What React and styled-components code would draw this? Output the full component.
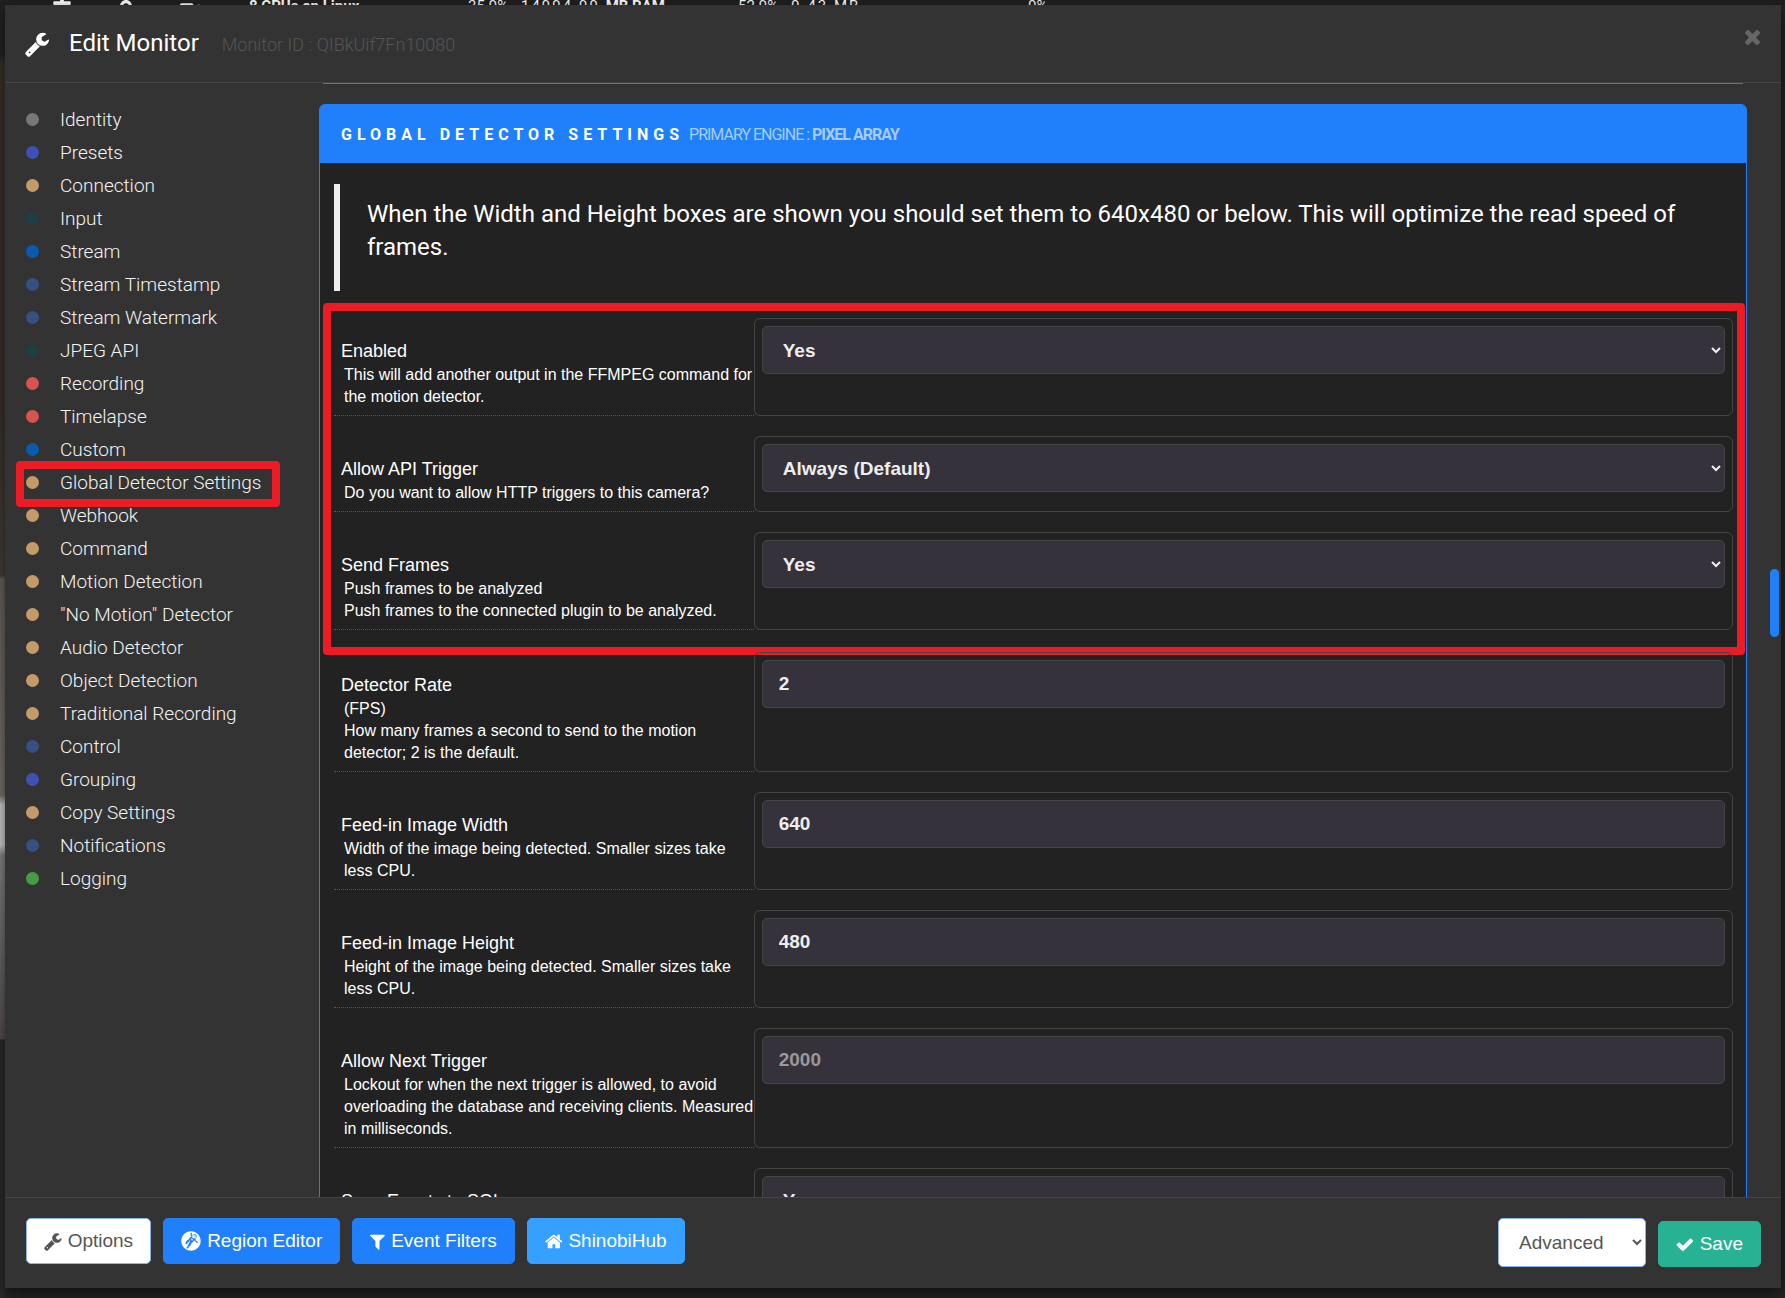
import React from 'react';
import styled, { createGlobalStyle } from 'styled-components';
import { FaGrav, FaLock, FaPlus, FaVideo } from 'react-icons/fa';

const GlobalStyle = createGlobalStyle`
  * {
    box-sizing: border-box;
  }

  body {
    margin: 0;
    background: #242424;
    color: #fff;
    font-family: Roboto, 'Liberation Sans', sans-serif;
  }

  button, input, select {
    font-family: 'Liberation Sans', Arial, sans-serif;
  }
`;

const Page = styled.div`
  position: relative;
  height: 100vh;
  overflow: hidden;
`;

const StatusBar = styled.header`
  display: flex;
  align-items: flex-start;
  height: 5px;
  padding-left: 52px;
  overflow: hidden;
  background: #202020;
`;

const StatusIcons = styled.div`
  display: flex;
  align-items: flex-start;
  gap: 44px;
  width: 197px;
  height: 5px;
  font-size: 20px;

  svg:first-child {
    align-self: center;
  }
`;

const Stat = styled.span`
  width: ${props => props.width}px;
  font-size: 15px;
  line-height: 12px;
  letter-spacing: ${props => (props.$spaced ? 2 : 0)}px;
  white-space: pre;

  b {
    letter-spacing: 0;
  }
`;

const Backdrop = styled.div`
  display: flex;
  height: calc(100vh - 5px);
  padding: 0 4px 10px 5px;
  background: linear-gradient(to bottom, #222 0 48px, #3a3229 60px, #3a302a 400px, #473d37 570px, #66615b 574px, #77736c 790px, #d0d0d0 800px 840px, #88868a 850px, #55504f 1034px, #2a2a2a 1035px);
  background-repeat: no-repeat;
  background-size: 5px 100%;
`;

const Modal = styled.div`
  display: flex;
  flex: 1;
  flex-direction: column;
  min-width: 0;
  background: #333;
  box-shadow: 0 5px 15px rgba(0, 0, 0, 0.6);
`;

const ModalHeader = styled.div`
  display: flex;
  flex: none;
  align-items: center;
  height: 78px;
  padding: 0 21px 0 20px;
  border-bottom: 1px solid #444;
`;

const HeaderIcon = styled.span`
  display: flex;
  width: 44px;
  font-size: 26px;
`;

const Title = styled.h1`
  flex: 1;
  margin: 0;
  font-size: 24px;
  font-weight: 400;
  line-height: 34px;
`;

const MonitorId = styled.small`
  margin-left: 23px;
  color: #555;
  font-size: 18px;
  font-weight: 300;
`;

const CloseButton = styled.button`
  display: flex;
  align-self: flex-start;
  margin-top: 25px;
  padding: 0;
  border: 0;
  background: none;
  color: #666;
  font-size: 15px;
`;

const ModalBody = styled.div`
  display: flex;
  flex: 1;
  min-height: 0;
`;

const Sidebar = styled.nav`
  flex: none;
  width: 314px;
  padding-top: 20px;
`;

const SidebarLink = styled.a`
  position: relative;
  display: flex;
  align-items: center;
  gap: 21px;
  height: 33px;
  padding-left: 21px;
  color: #f4f4f4;
  font-size: 19px;
  font-weight: 300;
  text-decoration: none;
`;

const Dot = styled.span`
  width: 13px;
  height: 13px;
  border-radius: 50%;
  background: ${props => props.color};
`;

const LinkHighlight = styled.span`
  position: absolute;
  inset: -5px 39px -8px 11px;
  border: 8px solid #ed1c24;
  border-radius: 4px;
  pointer-events: none;
`;

const Content = styled.main`
  flex: 1;
  min-width: 0;
  padding-right: 10px;
  overflow: hidden;
`;

const PreviousCard = styled.div`
  height: 1px;
  margin: 0 28px 20px 4px;
  background: #2080fc;
`;

const Card = styled.section`
  margin-right: 24px;
  border: 1px solid #2080fc;
  border-radius: 6px;
  background: #222;
`;

const CardHeader = styled.h2`
  display: flex;
  align-items: center;
  height: 58px;
  margin: 0;
  padding-left: 21px;
  border-radius: 4px 4px 0 0;
  background: #2080fc;
  font-size: 16px;
  font-weight: 700;
  letter-spacing: 5px;
`;

const Engine = styled.small`
  margin-left: 5px;
  color: #a6ccfd;
  font-size: 16px;
  font-weight: 400;
  letter-spacing: -1px;
`;

const CardBody = styled.div`
  padding: 21px 13px 21px 14px;
`;

const Note = styled.blockquote`
  height: 107px;
  margin: 0 0 27px;
  padding: 14px 27px;
  border-left: 6px solid #eee;
  font-size: 24px;
  line-height: 33px;
`;

const FieldGroup = styled.div`
  position: relative;
  display: grid;
  gap: 20px;
  margin-bottom: 22px;
`;

const GroupHighlight = styled.span`
  position: absolute;
  inset: -15px -12px -25px -11px;
  border: 8px solid #ed1c24;
  border-radius: 4px;
  pointer-events: none;
`;

const FieldRow = styled.div`
  display: grid;
  grid-template-columns: 30% 1fr;
`;

const FieldLabel = styled.label`
  padding: 21px 0 7px 7px;
  border-bottom: 1px dotted #555;
  font-family: 'Liberation Sans', Arial, sans-serif;
  font-size: 18px;
  line-height: 25px;
`;

const Description = styled.small`
  display: block;
  padding-left: 3px;
  font-size: 16px;
  line-height: 22px;
  white-space: pre-line;
`;

const FieldBox = styled.div`
  padding: 7px;
  border: 1px solid #444;
  border-radius: 6px;
`;

const Input = styled.input`
  display: block;
  width: 100%;
  height: 48px;
  padding: 0 16px;
  border: 1px solid #444;
  border-radius: 5px;
  background: #36323c;
  color: #eee;
  font-size: 19px;
  font-weight: 700;

  &::placeholder {
    color: #999;
  }
`;

const ModalFooter = styled.div`
  display: flex;
  flex: none;
  align-items: flex-start;
  gap: 12px;
  height: 91px;
  padding: 20px 20px 0 21px;
  border-top: 1px solid #444;
`;

const Button = styled.button`
  display: flex;
  align-items: center;
  gap: 6px;
  height: 46px;
  padding: 0 17px;
  border: 1px solid ${props => props.$border || props.color};
  border-radius: 5px;
  background: ${props => props.color};
  color: ${props => props.$text || '#fff'};
  font-size: 19px;
`;

const FooterRight = styled.div`
  display: flex;
  align-items: flex-end;
  gap: 12px;
  margin-left: auto;
`;

const ModeSelect = styled.select`
  width: 148px;
  height: 49px;
  padding: 0 16px;
  border: 1px solid #8ab4f0;
  border-radius: 5px;
  background: #fff;
  color: #555;
  font-size: 19px;
`;

const ScrollThumb = styled.div`
  position: absolute;
  top: 569px;
  right: 6px;
  width: 9px;
  height: 68px;
  border-radius: 5px;
  background: #2080fc;
`;

// [x, y, width, height, path]
const icons = {
  wrench: [
    64, 0, 1664, 1792,
    'M448 1472q0-26-19-45t-45-19-45 19-19 45 19 45 45 19 45-19 19-45zm644-420l-682 682q-37 37-90 37-52 0-91-37l-106-108q-38-36-38-90 0-53 38-91l681-681q39 98 114.5 173.5t173.5 114.5zm634-435q0 39-23 106-47 134-164.5 217.5t-258.5 83.5q-185 0-316.5-131.5t-131.5-316.5 131.5-316.5 316.5-131.5q58 0 121.5 16.5t107.5 46.5q16 11 16 28t-16 28l-293 169v224l193 107q5-3 79-48.5t135.5-81 70.5-35.5q15 0 23.5 10t8.5 25z',
  ],
  filter: [
    192, 0, 1408, 1792,
    'M1595 295q17 41-14 70l-493 493v742q0 42-39 59-13 5-25 5-27 0-45-19l-256-256q-19-19-19-45v-486l-493-493q-31-29-14-70 17-39 59-39h1280q42 0 59 39z',
  ],
  home: [
    64, 0, 1664, 1792,
    'M1472 992v480q0 26-19 45t-45 19h-384v-384h-256v384h-384q-26 0-45-19t-19-45v-480q0-1 .5-3t.5-3l575-474 575 474q1 2 1 6zm223-69l-62 74q-8 9-21 11h-3q-13 0-21-7l-692-577-692 577q-12 8-24 7-13-2-21-11l-62-74q-8-10-7-23.5t11-21.5l719-599q32-26 76-26t76 26l244 204v-195q0-14 9-23t23-9h192q14 0 23 9t9 23v408l219 182q10 8 11 21.5t-7 23.5z',
  ],
  check: [
    64, 0, 1664, 1792,
    'M1671 566q0 40-28 68l-724 724-136 136q-28 28-68 28t-68-28l-136-136-362-362q-28-28-28-68t28-68l136-136q28-28 68-28t68 28l294 295 656-657q28-28 68-28t68 28l136 136q28 28 28 68z',
  ],
  close: [
    302, 366, 1188, 1188,
    'M1490 1322q0 40-28 68l-136 136q-28 28-68 28t-68-28l-294-294-294 294q-28 28-68 28t-68-28l-136-136q-28-28-28-68t28-68l294-294-294-294q-28-28-28-68t28-68l136-136q28-28 68-28t68 28l294 294 294-294q28-28 68-28t68 28l136 136q28 28 28 68t-28 68l-294 294 294 294q28 28 28 68z',
  ],
};

const sections = [
  ['Identity', '#777'],
  ['Presets', '#3f51b5'],
  ['Connection', '#c49a68'],
  ['Input', '#1f3d44'],
  ['Stream', '#0a5ab0'],
  ['Stream Timestamp', '#375083'],
  ['Stream Watermark', '#375083'],
  ['JPEG API', '#1f3d44'],
  ['Recording', '#d9534f'],
  ['Timelapse', '#d9534f'],
  ['Custom', '#0a5ab0'],
  ['Global Detector Settings', '#c49a68'],
  ['Webhook', '#c49a68'],
  ['Command', '#c49a68'],
  ['Motion Detection', '#c49a68'],
  ['"No Motion" Detector', '#c49a68'],
  ['Audio Detector', '#c49a68'],
  ['Object Detection', '#c49a68'],
  ['Traditional Recording', '#c49a68'],
  ['Control', '#375083'],
  ['Grouping', '#3f51b5'],
  ['Copy Settings', '#c49a68'],
  ['Notifications', '#375083'],
  ['Logging', '#449d44'],
];

const triggerFields = [
  {
    id: 'detector',
    label: 'Enabled',
    description: 'This will add another output in the FFMPEG command for the motion detector.',
    options: ['Yes', 'No'],
  },
  {
    id: 'detector_trigger',
    label: 'Allow API Trigger',
    description: 'Do you want to allow HTTP triggers to this camera?',
    options: ['Always (Default)', 'No'],
  },
  {
    id: 'detector_send_frames',
    label: 'Send Frames',
    description: 'Push frames to be analyzed\nPush frames to the connected plugin to be analyzed.',
    options: ['Yes', 'No'],
  },
];

const frameFields = [
  {
    id: 'detector_fps',
    label: 'Detector Rate',
    description: '(FPS)\nHow many frames a second to send to the motion detector; 2 is the default.',
    value: '2',
  },
  {
    id: 'detector_scale_x',
    label: 'Feed-in Image Width',
    description: 'Width of the image being detected. Smaller sizes take less CPU.',
    value: '640',
  },
  {
    id: 'detector_scale_y',
    label: 'Feed-in Image Height',
    description: 'Height of the image being detected. Smaller sizes take less CPU.',
    value: '480',
  },
  {
    id: 'detector_lock_timeout',
    label: 'Allow Next Trigger',
    description:
      'Lockout for when the next trigger is allowed, to avoid overloading the database and receiving clients. Measured in milliseconds.',
    placeholder: '2000',
  },
  {
    id: 'detector_save',
    label: 'Save Events to SQL',
    description: 'Save Motion Events in SQL.',
    options: ['Yes', 'No'],
  },
];

function Icon({ name }) {
  const [x, y, width, height, path] = icons[name];

  return (
    <svg viewBox={`${x} ${y} ${width} ${height}`} height="1em" fill="currentColor" aria-hidden="true">
      <path d={path} />
    </svg>
  );
}

function Field({ field }) {
  return (
    <FieldRow>
      <FieldLabel htmlFor={field.id}>
        {field.label}
        <Description>{field.description}</Description>
      </FieldLabel>
      <FieldBox>
        {field.options ? (
          <Input as="select" id={field.id}>
            {field.options.map(option => (
              <option key={option}>{option}</option>
            ))}
          </Input>
        ) : (
          <Input id={field.id} defaultValue={field.value} placeholder={field.placeholder} />
        )}
      </FieldBox>
    </FieldRow>
  );
}

export default function App() {
  return (
    <Page>
      <GlobalStyle />
      <StatusBar>
        <StatusIcons>
          <FaPlus />
          <FaLock />
          <FaVideo />
        </StatusIcons>
        <Stat width={219}>
          <b>8 CPUs on Linux</b>
        </Stat>
        <Stat width={53}>35.9%</Stat>
        <Stat width={217} $spaced>
          14994.99 <b>MB RAM</b>
        </Stat>
        <Stat width={53}>52.9%</Stat>
        <Stat width={237} $spaced>
          0.43 MB
        </Stat>
        <Stat width={40}>0%</Stat>
      </StatusBar>
      <Backdrop>
        <Modal>
          <ModalHeader>
            <HeaderIcon>
              <Icon name="wrench" />
            </HeaderIcon>
            <Title>
              Edit Monitor
              <MonitorId>Monitor ID : QIBkUif7Fn10080</MonitorId>
            </Title>
            <CloseButton aria-label="Close">
              <Icon name="close" />
            </CloseButton>
          </ModalHeader>
          <ModalBody>
            <Sidebar>
              {sections.map(([name, color]) => (
                <SidebarLink key={name} href="#">
                  <Dot color={color} />
                  {name}
                  {name === 'Global Detector Settings' && <LinkHighlight />}
                </SidebarLink>
              ))}
            </Sidebar>
            <Content>
              <PreviousCard />
              <Card>
                <CardHeader>
                  GLOBAL DETECTOR SETTINGS
                  <Engine>
                    PRIMARY ENGINE : <b>PIXEL ARRAY</b>
                  </Engine>
                </CardHeader>
                <CardBody>
                  <Note>
                    When the Width and Height boxes are shown you should set them to 640x480 or below. This will
                    optimize the read speed of frames.
                  </Note>
                  <FieldGroup>
                    {triggerFields.map(field => (
                      <Field key={field.id} field={field} />
                    ))}
                    <GroupHighlight />
                  </FieldGroup>
                  <FieldGroup>
                    {frameFields.map(field => (
                      <Field key={field.id} field={field} />
                    ))}
                  </FieldGroup>
                </CardBody>
              </Card>
            </Content>
          </ModalBody>
          <ModalFooter>
            <Button color="#fff" $border="#8ab4f0" $text="#555">
              <Icon name="wrench" />
              Options
            </Button>
            <Button color="#2080fc">
              <FaGrav size={20} />
              Region Editor
            </Button>
            <Button color="#2080fc">
              <Icon name="filter" />
              Event Filters
            </Button>
            <Button color="#35a0ff">
              <Icon name="home" />
              ShinobiHub
            </Button>
            <FooterRight>
              <ModeSelect aria-label="Mode">
                <option>Advanced</option>
                <option>Simple</option>
              </ModeSelect>
              <Button color="#28b294">
                <Icon name="check" />
                Save
              </Button>
            </FooterRight>
          </ModalFooter>
        </Modal>
      </Backdrop>
      <ScrollThumb />
    </Page>
  );
}
